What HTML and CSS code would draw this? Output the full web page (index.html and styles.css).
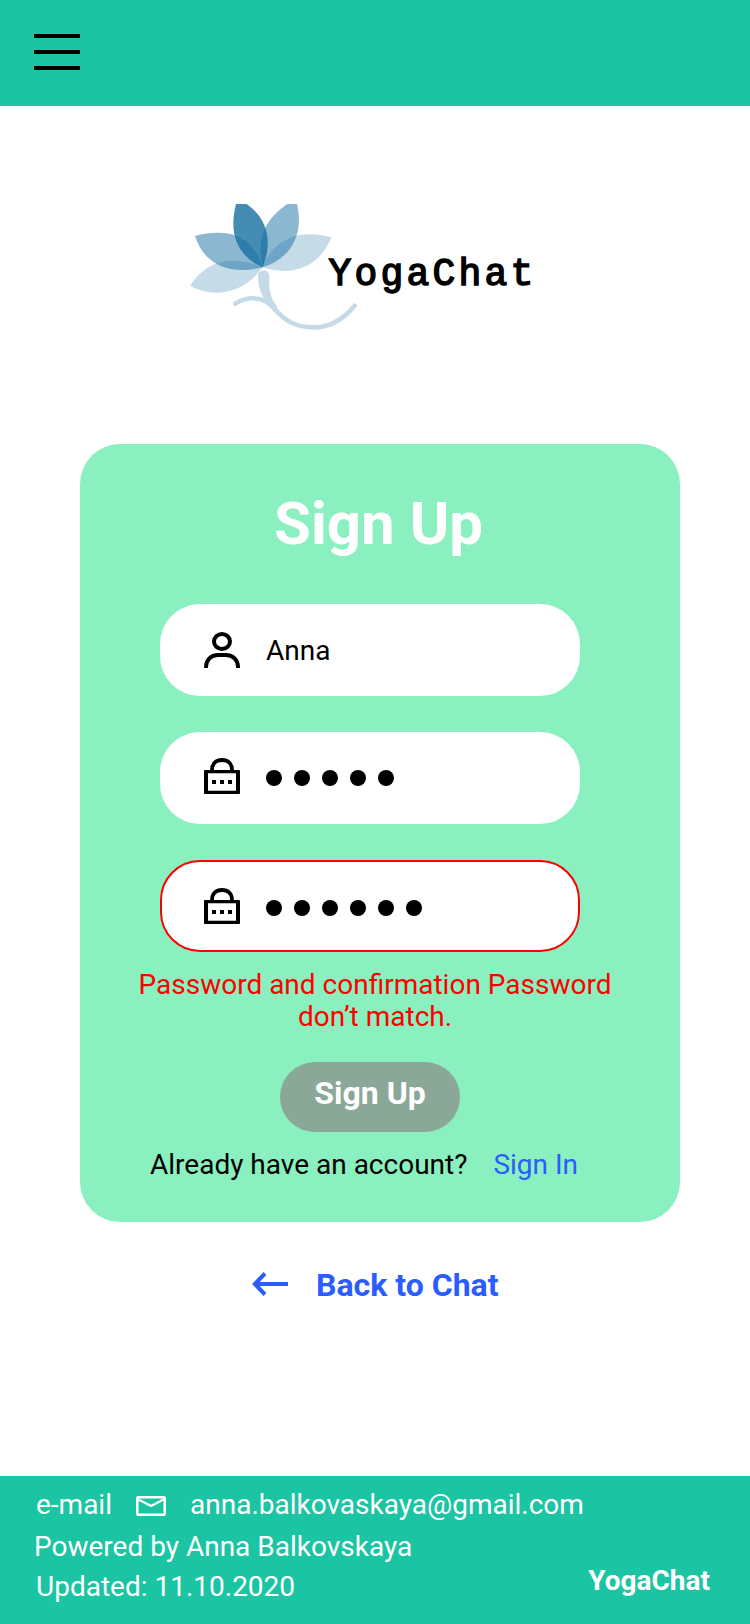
FILE: index.html
```html
<!DOCTYPE html>
<html lang="en">
<head>
<meta charset="utf-8">
<title>YogaChat – Sign Up</title>
<link rel="stylesheet" href="styles.css">
</head>
<body>
<svg width="0" height="0" class="defs" aria-hidden="true">
  <symbol id="lock" viewBox="0 0 36 36">
    <path d="M8 13V12C8 5.800 12 2 18 2S28 5.800 28 12V13" fill="none" stroke="#000" stroke-width="3.8"/>
    <path fill-rule="evenodd" d="M1 12H35Q36 12 36 13V35Q36 36 35 36H1Q0 36 0 35V13Q0 12 1 12ZM4 15.3V32.7H32V15.3Z"/>
    <path d="M8 22h4v4H8zM16 22h4v4h-4zM24 22h4v4h-4z"/>
  </symbol>
</svg>
<div class="page">
  <header class="topbar">
    <button class="menu" aria-label="Menu"><span class="bar"></span><span class="bar"></span><span class="bar"></span></button>
  </header>

  <main class="main">
    <svg class="logo" viewBox="0 0 370 130" role="img" aria-label="YogaChat">
      <g transform="scale(.33333) translate(0 -42)" fill="#176FA3">
        <path opacity=".25" d="M30 288C84 204 165 198 248 232C196 304 112 330 30 288Z"/>
        <path opacity=".5" d="M45 138C140 114 218 132 248 232C152 256 74 228 45 138Z"/>
        <path opacity=".25" d="M454 142C360 116 280 146 248 232C342 262 420 228 454 142Z"/>
        <path opacity=".5" d="M322 42C248 92 230 154 248 232C336 204 372 130 351 42Z"/>
        <path opacity=".8" d="M168 42C146 128 168 196 248 232C280 152 260 84 200 42Z"/>
        <g opacity=".25">
          <path d="M234 256C236 236 269 236 268 258C266 302 272 325 292 350L280 364C250 330 234 300 234 256Z"/>
          <path d="M166 341C198 320 246 316 278 350C316 396 350 412 402 412C450 412 488 390 524 347" fill="none" stroke="#176FA3" stroke-width="14" stroke-linecap="round"/>
        </g>
      </g>
      <text class="wordmark" x="148.500" y="80.500">YogaChat</text>
    </svg>

    <form class="card">
      <h1 class="title">Sign Up</h1>
      <div class="fields">
        <div class="field">
          <svg class="icon" viewBox="0 0 36 36" fill="none" stroke="#000" stroke-width="4"><ellipse cx="18" cy="9.5" rx="8" ry="7.5"/><path d="M2 36V35C2 28 7 23 14 23H22C29 23 34 28 34 35V36"/></svg>
          <span class="value">Anna</span>
        </div>
        <div class="field">
          <svg class="icon icon-lock"><use href="#lock"/></svg>
          <span class="dots"><i></i><i></i><i></i><i></i><i></i></span>
        </div>
        <div class="field field-error">
          <svg class="icon icon-lock"><use href="#lock"/></svg>
          <span class="dots"><i></i><i></i><i></i><i></i><i></i><i></i></span>
        </div>
      </div>
      <p class="error">Password and confirmation Password don’t match.</p>
      <button type="button" class="submit">Sign Up</button>
      <p class="account"><span>Already have an account?</span><a class="signin">Sign In</a></p>
    </form>

    <a class="back">
      <svg class="arrow" viewBox="0 0 36 24" fill="none" stroke="#2B5CFF" stroke-width="4"><path d="M36 12H3M13 1.500L2.800 12L13 22.500"/></svg>
      <span>Back to Chat</span>
    </a>
  </main>

  <footer class="footer">
    <div class="contacts">
      <div class="mail"><span>e-mail</span>
        <svg class="envelope" viewBox="0 0 30 20" fill="none" stroke="#fff"><rect x="1.3" y="1.2" width="27.4" height="17.6" rx="1" stroke-width="2.5"/><path d="M1.500 3L15 10L28.500 3" stroke-width="2.2"/></svg>
        <span>anna.balkovaskaya@gmail.com</span></div>
      <div class="author">Powered by Anna Balkovskaya</div>
      <div class="updated">Updated: 11.10.2020</div>
    </div>
    <strong class="brand">YogaChat</strong>
  </footer>
</div>
</body>
</html>
```
FILE: styles.css
```css
* { box-sizing: border-box; }
body { margin: 0; font-family: Roboto, sans-serif; font-size: 28px; line-height: 32px; color: #000; background: #fff; }
h1, p { margin: 0; }
button { border: 0; font-family: inherit; }
svg { display: block; flex: none; }
.defs { position: absolute; }
.page { width: 750px; height: 1624px; display: flex; flex-direction: column; overflow: hidden; }

.topbar { height: 106px; padding: 34px; background: #1BC4A2; }
.menu { display: flex; flex-direction: column; gap: 12px; width: 46px; padding: 0; background: none; }
.bar { height: 4px; background: #000; }

.main { flex: 1; padding-top: 98px; }
.logo { width: 370px; height: 130px; margin-left: 180px; }
.wordmark { font-family: "Liberation Mono", monospace; font-size: 38px; letter-spacing: 3.2px; stroke: #000; stroke-width: 1.5; }

.card { width: 600px; height: 778px; margin: 110px 0 0 80px; padding-top: 45px; border-radius: 40px; background: #8AF0BF; }
.title { padding-left: 194px; font-size: 60px; line-height: 70px; font-weight: 700; color: #fff; }
.fields { display: flex; flex-direction: column; gap: 36px; width: 420px; margin: 45px 0 0 80px; }
.field { display: flex; align-items: center; gap: 26px; height: 92px; padding: 0 44px; border-radius: 40px; background: #fff; }
.field-error { border: 2px solid #f00; padding: 4px 42px 0; }
.icon { width: 36px; height: 36px; }
.icon-lock { margin-top: -4px; }
.value { padding-top: 2px; }
.dots { display: flex; gap: 12px; }
.dots i { width: 16px; height: 16px; border-radius: 50%; background: #000; }
.error { width: 480px; margin: 17px 0 0 55px; text-align: center; color: #f00; }
.submit { display: block; width: 180px; height: 70px; margin: 29px 0 0 200px; padding: 0 0 8px; border-radius: 35px; background: #8BA798; color: #fff; font-size: 32px; line-height: 38px; font-weight: 700; }
.account { display: flex; gap: 26px; margin: 17px 0 0 70px; }
.signin { color: #2B5CFF; }

.back { display: flex; align-items: center; gap: 28px; margin: 44px 0 0 252px; color: #2B5CFF; font-size: 32px; line-height: 38px; font-weight: 700; }
.arrow { width: 36px; height: 24px; margin-bottom: 2px; }

.footer { display: flex; justify-content: space-between; align-items: flex-start; height: 148px; padding: 13px 40px 0 34px; background: #1BC4A2; color: #fff; }
.mail { display: flex; align-items: center; margin-bottom: 10px; padding-left: 2px; }
.envelope { width: 30px; height: 20px; margin: 2px 24px 0; }
.author { margin-bottom: 8px; }
.updated { padding-left: 2px; }
.brand { padding-top: 76px; font-weight: 700; }
```
